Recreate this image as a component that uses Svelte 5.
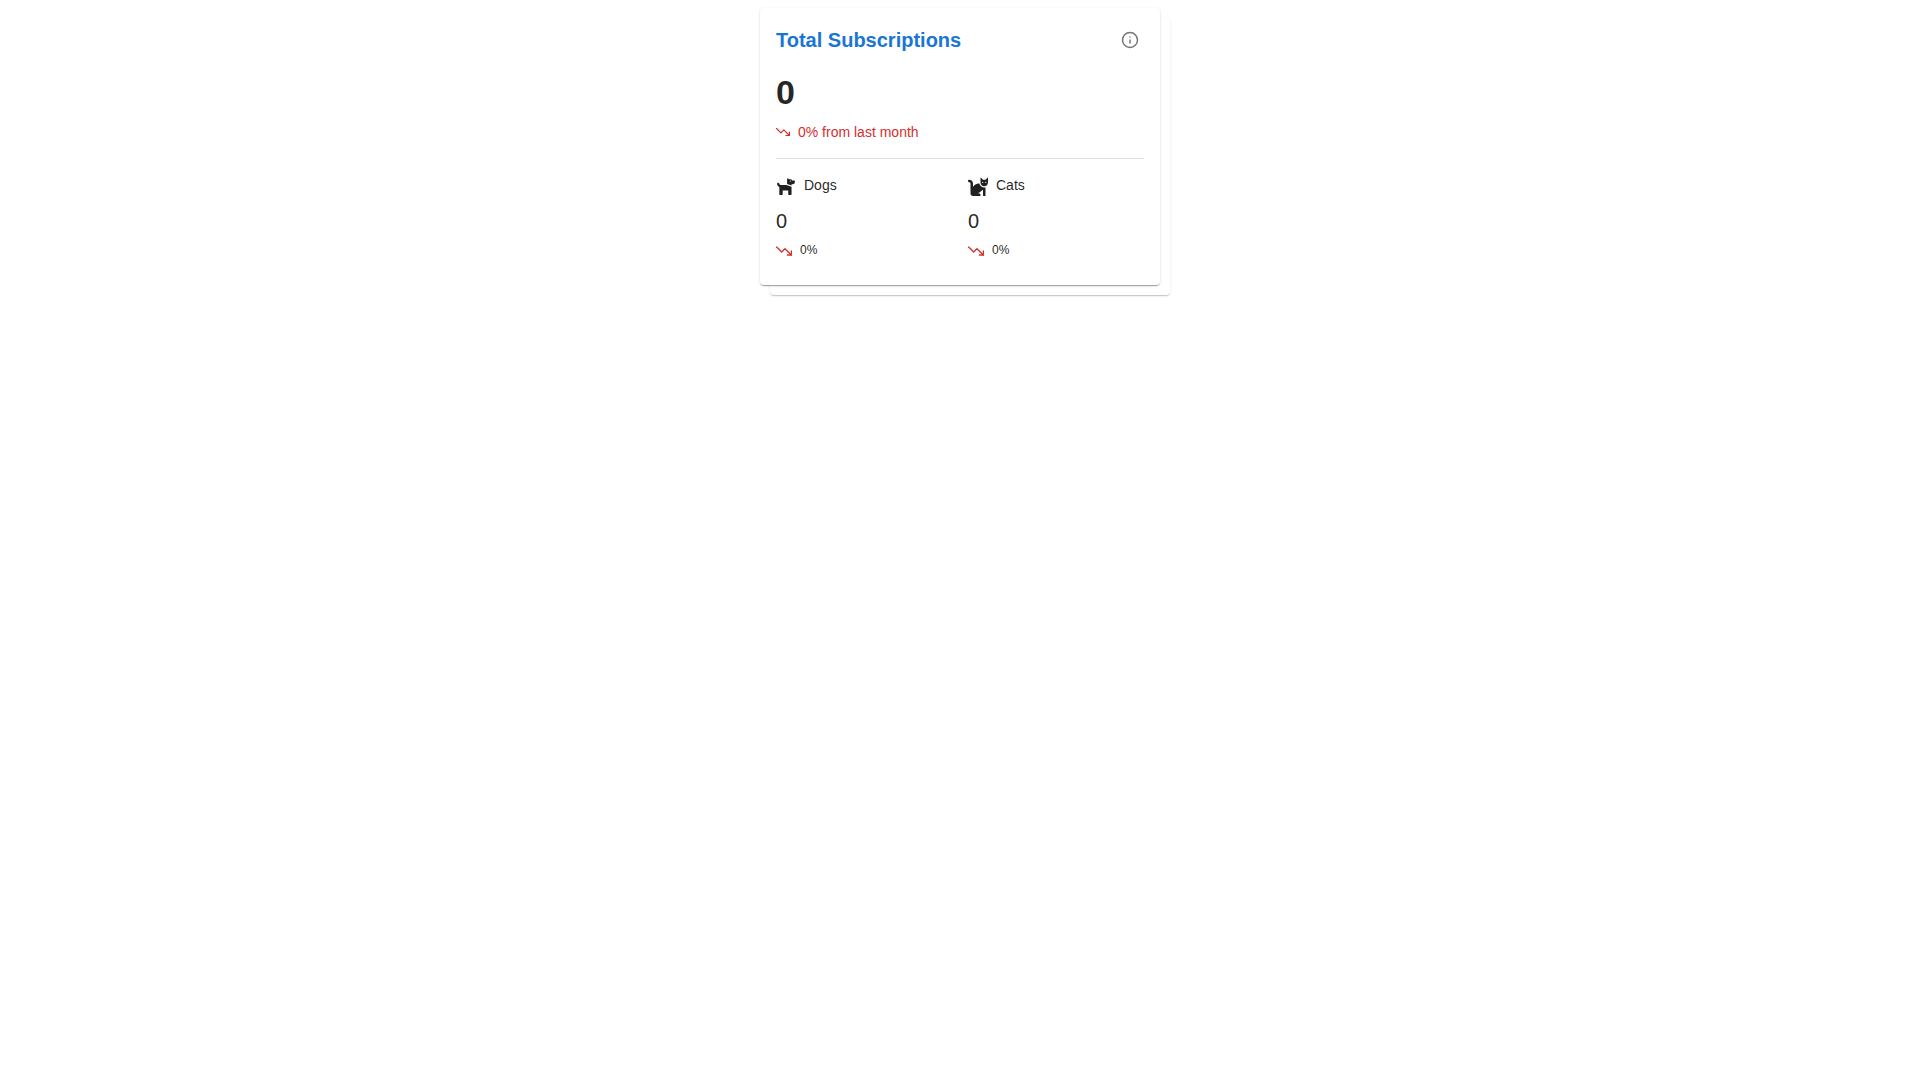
<script lang="ts">
  const total = { count: 0, change: 0 };

  const species = [
    {
      name: "Dogs",
      count: 0,
      change: 0,
      viewBox: "0 0 576 512",
      path: "M298.06,224,448,277.55V496a16,16,0,0,1-16,16H368a16,16,0,0,1-16-16V384H192V496a16,16,0,0,1-16,16H112a16,16,0,0,1-16-16V282.09C58.84,268.84,32,233.66,32,192a32,32,0,0,1,64,0,32.06,32.06,0,0,0,32,32ZM544,112v32a64,64,0,0,1-64,64H448v35.58L320,197.87V48c0-14.25,17.22-21.39,27.31-11.31L374.59,64h53.63c10.91,0,23.75,7.92,28.62,17.69L464,96h64A16,16,0,0,1,544,112Zm-112,0a16,16,0,1,0-16,16A16,16,0,0,0,432,112Z",
    },
    {
      name: "Cats",
      count: 0,
      change: 0,
      viewBox: "0 0 512 512",
      path: "M290.59 192c-20.18 0-106.82 1.98-162.59 85.95V192c0-52.94-43.06-96-96-96-17.67 0-32 14.33-32 32s14.33 32 32 32c17.64 0 32 14.36 32 32v256c0 35.3 28.7 64 64 64h176c8.84 0 16-7.16 16-16v-16c0-17.67-14.33-32-32-32h-32l128-96v144c0 8.84 7.16 16 16 16h32c8.84 0 16-7.16 16-16V289.86c-10.29 2.67-20.89 4.54-32 4.54-61.81 0-113.52-44.05-125.41-102.4zM448 96h-64l-64-64v134.4c0 53.02 42.98 96 96 96s96-42.98 96-96V32l-64 64zm-72 80c-8.84 0-16-7.16-16-16s7.16-16 16-16 16 7.16 16 16-7.16 16-16 16zm80 0c-8.84 0-16-7.16-16-16s7.16-16 16-16 16 7.16 16 16-7.16 16-16 16z",
    },
  ];
</script>

{#snippet trendDown(size: number)}
  <svg
    class="trend"
    width={size}
    height={size}
    viewBox="0 0 24 24"
    fill="none"
    stroke="currentColor"
    stroke-width="2"
    stroke-linecap="round"
    stroke-linejoin="round"
    aria-hidden="true"
  >
    <polyline points="23 18 13.5 8.5 8.5 13.5 1 6" />
    <polyline points="17 18 23 18 23 12" />
  </svg>
{/snippet}

<div class="stack">
  <div class="card back"></div>
  <section class="card front">
    <header>
      <h2>Total Subscriptions</h2>
      <button type="button" aria-label="More information">
        <svg
          width="18"
          height="18"
          viewBox="0 0 24 24"
          fill="none"
          stroke="currentColor"
          stroke-width="2"
          stroke-linecap="round"
          stroke-linejoin="round"
          aria-hidden="true"
        >
          <circle cx="12" cy="12" r="10" />
          <line x1="12" y1="16" x2="12" y2="12" />
          <line x1="12" y1="8" x2="12.01" y2="8" />
        </svg>
      </button>
    </header>

    <p class="total">{total.count}</p>
    <p class="change">
      {@render trendDown(14)}
      {total.change}% from last month
    </p>

    <hr />

    <div class="species">
      {#each species as item}
        <div>
          <div class="row name">
            <svg width="20" height="20" viewBox={item.viewBox} fill="currentColor" aria-hidden="true">
              <path d={item.path} />
            </svg>
            <span>{item.name}</span>
          </div>
          <p class="count">{item.count}</p>
          <div class="row percent">
            {@render trendDown(16)}
            <span>{item.change}%</span>
          </div>
        </div>
      {/each}
    </div>
  </section>
</div>

<style>
  :global(body) {
    display: flow-root;
    box-sizing: border-box;
    min-height: 100vh;
    background: #fff;
  }

  .stack {
    position: relative;
    max-width: 400px;
    margin: 8px auto;
    color: rgba(0, 0, 0, 0.87);
    font-family: "Liberation Sans", Arial, sans-serif;
    font-size: 14px;
    line-height: 20px;
  }

  .card {
    background: #fff;
    border-radius: 4px;
    box-shadow:
      0 2px 1px -1px rgba(0, 0, 0, 0.2),
      0 1px 1px 0 rgba(0, 0, 0, 0.14),
      0 1px 3px 0 rgba(0, 0, 0, 0.12);
  }

  .front {
    position: relative;
    padding: 16px 16px 25px;
  }

  /* second sheet peeking out behind the card */
  .back {
    position: absolute;
    inset: 10px -10px -10px 10px;
    opacity: 0.6;
  }

  svg {
    display: block;
    flex-shrink: 0;
  }

  header {
    display: flex;
    align-items: center;
    justify-content: space-between;
    margin-bottom: 16px;
  }

  h2 {
    margin: 0;
    color: #1976d2;
    font-size: 20px;
    font-weight: 700;
    line-height: 32px;
  }

  button {
    padding: 5px;
    border: 0;
    border-radius: 50%;
    background: none;
    color: rgba(0, 0, 0, 0.54);
    cursor: pointer;
  }

  p {
    margin: 0;
  }

  .total {
    margin-bottom: 10px;
    font-size: 34px;
    font-weight: 700;
    line-height: 40px;
  }

  .change {
    display: flex;
    align-items: center;
    gap: 8px;
    color: #d32f2f;
  }

  hr {
    height: 1px;
    margin: 16px 0 15px;
    border: 0;
    background: rgba(0, 0, 0, 0.12);
  }

  .species {
    display: grid;
    grid-template-columns: 1fr 1fr;
    gap: 16px;
  }

  .row {
    display: flex;
    align-items: center;
    gap: 8px;
  }

  .row svg,
  .row :global(.trend) {
    margin-top: 2px;
  }

  .name {
    margin-bottom: 8px;
  }

  .count {
    margin-bottom: 2px;
    font-size: 20px;
    line-height: 34px;
  }

  .percent {
    font-size: 12px;
  }

  .trend {
    color: #d32f2f;
  }
</style>
